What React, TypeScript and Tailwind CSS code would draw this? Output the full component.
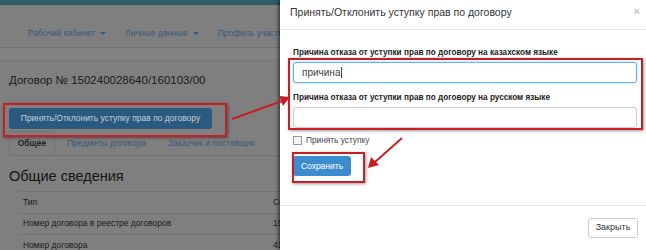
import React from 'react';

const navItems = ['Рабочий кабинет', 'Личные данные', 'Профиль участнику'];
const rows = [
  { label: 'Тип', value: 'Сервис' },
  { label: 'Номер договора в реестре договоров', value: '150240028640' },
  { label: 'Номер договора', value: '4160103' },
];

const Caret = () => (
  <span className="ml-[5px] inline-block border-x-[3px] border-t-[3px] border-x-transparent border-t-[#3b5878] align-middle" />
);

const App: React.FC = () => {
  return (
    <div
      className="relative h-[250px] w-[646px] overflow-hidden bg-[#7f7f7f] text-[#111]"
      style={{ fontFamily: '"Liberation Sans", Arial, sans-serif' }}
    >
      {/* dimmed page behind the modal */}
      <div className="h-[5px] bg-[#2c5e69]" />
      <div className="flex h-[43px] gap-[19px] border-b border-[#737373] pl-[28px] pt-[22px] text-[8.5px] leading-[12px] text-[#3b5878]">
        {navItems.map((item, i) => (
          <span key={item} className="whitespace-nowrap">
            {item}
            {i < 2 && <Caret />}
          </span>
        ))}
      </div>
      <div className="h-[13px] border-b border-[#777] bg-[#828282]" />
      <div className="px-[9px]">
        <div className="pt-[12px] text-[11.5px] leading-[14px] text-[#1a1a1a]">Договор № 150240028640/160103/00</div>
        <button className="mt-[21px] h-[21px] w-[203px] whitespace-nowrap rounded-[3px] bg-[#2b5a80] text-[8.5px] text-[#c5cfd8]">
          Принять/Отклонить уступку прав по договору
        </button>
        <div className="mt-[2px] flex h-[25px] items-end border-b border-[#737373] text-[8.5px]">
          <div className="flex h-[24px] w-[46px] items-center justify-center border-x border-t border-[#737373] font-bold text-[#222]">
            Общее
          </div>
          <div className="ml-[12px] flex h-[24px] items-center whitespace-nowrap text-[#3b5878]">Предметы договора</div>
          <div className="ml-[22px] flex h-[24px] items-center whitespace-nowrap text-[#3b5878]">Заказчик и поставщик</div>
        </div>
        <div className="mt-[11px] text-[14.5px] leading-[18px] text-[#151515]">Общие сведения</div>
        <div className="ml-[10px] mt-[6px] text-[8.5px] text-[#1a1a1a]">
          {rows.map((r) => (
            <div key={r.label} className="flex h-[21.5px] items-center whitespace-nowrap border-t border-[#737373] pl-[4px]">
              <span className="w-[250px]">{r.label}</span>
              <span>{r.value}</span>
            </div>
          ))}
        </div>
      </div>

      {/* modal */}
      <div className="absolute left-[280px] top-0 flex h-[250px] w-[380px] flex-col bg-white shadow-[-2px_0_3px_rgba(0,0,0,0.5)]">
        <div className="flex h-[30px] items-start border-b border-[#e5e5e5] pl-[10px] pt-[6px] leading-[12px]">
          <span className="text-[10.5px] text-[#333]">Принять/Отклонить уступку прав по договору</span>
          <span className="ml-auto mr-[20px] mt-[-1px] text-[11px] font-bold text-[#c8c8c8]">×</span>
        </div>
        <div className="flex flex-col pl-[13px] text-[8.2px] leading-[10px]">
          <label className="mt-[18px] whitespace-nowrap font-bold text-[#222]">
            Причина отказа от уступки прав по договору на казахском языке
          </label>
          <div className="mt-[4px] flex h-[21px] w-[344px] items-center rounded-[3px] border border-[#66afe9] pl-[8px] text-[10px] text-[#444] shadow-[0_0_3px_rgba(102,175,233,0.6)]">
            причина<span className="ml-px h-[11px] w-px bg-[#444]" />
          </div>
          <label className="mt-[10px] whitespace-nowrap font-bold text-[#222]">
            Причина отказа от уступки прав по договору на русском языке
          </label>
          <div className="mt-[4px] h-[21px] w-[344px] rounded-[3px] border border-[#ccc]" />
          <div className="mt-[7px] flex items-center text-[8.3px] text-[#444]">
            <span className="h-[9px] w-[9px] border border-[#999] bg-[#f4f4f4]" />
            <span className="ml-[4px]">Принять уступку</span>
          </div>
          <button className="mt-[11px] h-[20px] w-[58px] rounded-[3px] bg-[#3c8dd0] text-[8.5px] text-white">
            Сохранить
          </button>
        </div>
        <div className="mt-auto flex h-[45px] items-start justify-end border-t border-[#e5e5e5] pr-[22px] pt-[12px]">
          <button className="h-[20px] w-[50px] rounded-[3px] border border-[#ccc] bg-white text-[9px] text-[#333]">
            Закрыть
          </button>
        </div>
      </div>

      {/* annotations */}
      <div className="absolute left-[3px] top-[103px] h-[34px] w-[224px] border-2 border-[#c91f24] shadow-[1px_1px_3px_rgba(0,0,0,0.4)]" />
      <div className="absolute left-[288px] top-[58px] h-[72px] w-[355px] border-2 border-[#c91f24] shadow-[1px_1px_3px_rgba(0,0,0,0.4)]" />
      <div className="absolute left-[292px] top-[152px] h-[31px] w-[73px] border-2 border-[#c91f24] shadow-[1px_1px_3px_rgba(0,0,0,0.4)]" />
      <svg className="absolute left-0 top-0" width="646" height="250">
        <line x1="232" y1="119" x2="282" y2="101" stroke="#c91f24" strokeWidth="2" />
        <path d="M290,97 L279,96 L283,106 Z" fill="#c91f24" />
        <line x1="402" y1="138" x2="375" y2="162" stroke="#c91f24" strokeWidth="2" />
        <path d="M368,168 L371,157 L379,165 Z" fill="#c91f24" />
      </svg>
    </div>
  );
};

export default App;
